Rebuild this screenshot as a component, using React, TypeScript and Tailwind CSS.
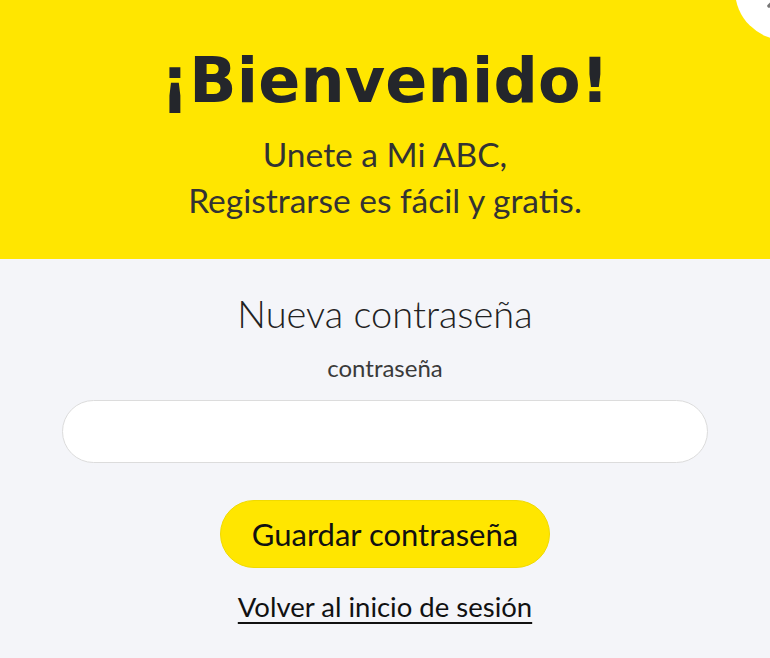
import React from 'react';

const App: React.FC = () => {
  return (
    <div className="relative min-h-[658px] w-full overflow-hidden bg-[#f4f5f9] font-['Lato',sans-serif] text-[#222]">
      {/* Header */}
      <div className="flex h-[259px] flex-col items-center bg-[#ffe600] pt-[43px]">
        <h1 className="font-['DejaVu_Sans',sans-serif] text-[62px] font-bold leading-[76px] tracking-[0.2px] text-[#24262b]">
          ¡Bienvenido!
        </h1>
        <p className="mt-[12px] text-center text-[33.5px] leading-[46px] text-[#333]">
          Unete a Mi ABC,
          <br />
          Registrarse es fácil y gratis.
        </p>
      </div>

      {/* Close button */}
      <button className="absolute left-[735px] top-[-60px] flex h-[100px] w-[100px] items-center justify-center rounded-full bg-white">
        <svg width="44" height="44" viewBox="0 0 44 44" className="text-[#777]">
          <path d="M6 6L38 38M38 6L6 38" stroke="currentColor" strokeWidth="3.5" strokeLinecap="round" />
        </svg>
      </button>

      {/* Form */}
      <div className="flex flex-col items-center px-[62px] pt-[30px]">
        <h2 className="text-[38px] font-light leading-[48px] text-[#222]">Nueva contraseña</h2>
        <label className="mt-[16px] text-[24px] font-normal leading-[30px] text-[#3a3a3a]">contraseña</label>
        <input
          type="password"
          className="mt-[17px] h-[63px] w-full rounded-full border border-[#dcdcdc] bg-white px-6 text-[20px] outline-none"
        />
        <button className="mt-[37px] h-[68px] rounded-full border border-[#f0da00] bg-[#ffe600] px-[31px] text-[31px] leading-none text-[#111]">
          Guardar contraseña
        </button>
        <a href="#" className="mt-[22px] text-[27.5px] leading-[34px] text-[#111] underline underline-offset-[5px]">
          Volver al inicio de sesión
        </a>
      </div>
    </div>
  );
};

export default App;
